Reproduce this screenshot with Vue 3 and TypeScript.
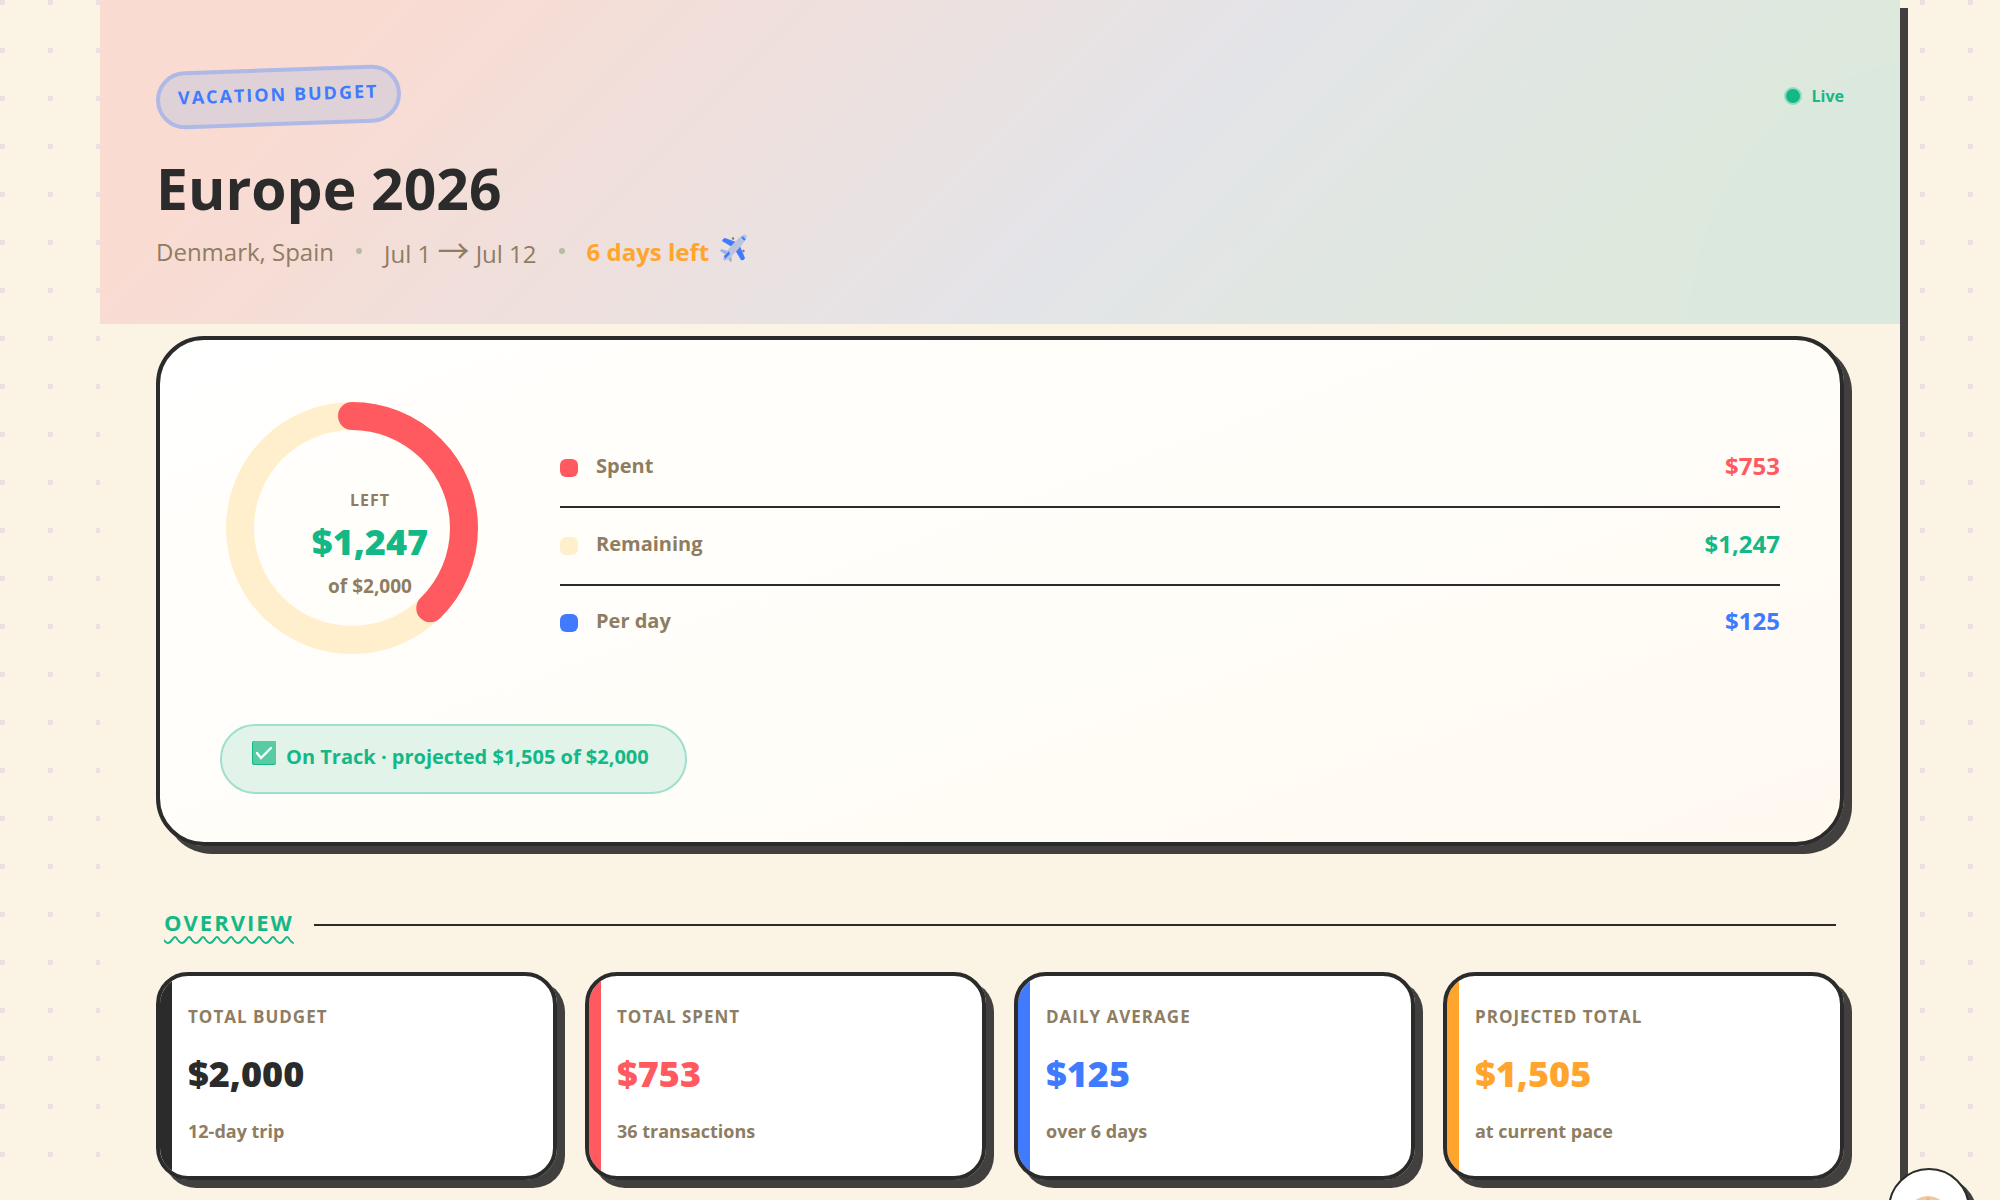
<script setup lang="ts">
interface Stat { label: string; value: string; note: string; tone: string }
interface Row { label: string; value: string; swatch: string; tone: string }

const rows: Row[] = [
  { label: 'Spent', value: '$753', swatch: 'bg-red', tone: 'red' },
  { label: 'Remaining', value: '$1,247', swatch: 'bg-cream', tone: 'green' },
  { label: 'Per day', value: '$125', swatch: 'bg-blue', tone: 'blue' },
]
const stats: Stat[] = [
  { label: 'Total budget', value: '$2,000', note: '12-day trip', tone: 'ink' },
  { label: 'Total spent', value: '$753', note: '36 transactions', tone: 'red' },
  { label: 'Daily average', value: '$125', note: 'over 6 days', tone: 'blue' },
  { label: 'Projected total', value: '$1,505', note: 'at current pace', tone: 'orange' },
]
const radius = 112
const circumference = 2 * Math.PI * radius
const spentArc = `${circumference * (753 / 2000)} ${circumference}`
</script>

<template>
  <div class="backdrop">
    <main class="page">
      <header class="hero">
        <div class="hero-top">
          <span class="tag">Vacation budget</span>
          <span class="live"><i class="live-dot"></i>Live</span>
        </div>
        <h1>Europe 2026</h1>
        <p class="meta">
          <span>Denmark, Spain</span>
          <i class="sep"></i>
          <span>Jul 1 <span class="arrow">→</span> Jul 12</span>
          <i class="sep"></i>
          <span class="days">6 days left</span>
          <svg class="plane" viewBox="0 0 28 28" aria-hidden="true">
            <path d="M16 8 5 4Q3 4 2 7l10 6zM20 12l5 12q-1 3-4 2l-6-10z" fill="#407bff" />
            <path d="M8 17 1 15 0 17l6 4 4 7 2-1-1-8z" fill="#9fb2e8" />
            <path d="M3 25Q5 17 19 4q5-5 7-3t-2 7Q13 22 7 26q-3 2-4-1z" fill="#bdc3dc" />
            <path d="m4 22 5-5 1 3-5 5z" fill="#407bff" />
            <path d="m22 3 3 3" stroke="#407bff" stroke-width="2" />
            <path d="m12 4 2 1M23 16l1 2" stroke="#7d7a80" stroke-width="2" />
          </svg>
        </p>
      </header>

      <section class="summary">
        <div class="summary-main">
          <div class="ring">
            <svg class="ring-svg" viewBox="0 0 264 264" aria-hidden="true">
              <circle class="track" cx="132" cy="132" :r="radius" />
              <circle class="arc" cx="132" cy="132" :r="radius" :stroke-dasharray="spentArc" transform="rotate(-90 132 132)" />
            </svg>
            <div class="ring-text">
              <span class="ring-label">Left</span>
              <strong class="ring-value green">$1,247</strong>
              <span class="ring-note">of $2,000</span>
            </div>
          </div>
          <dl class="legend">
            <div v-for="row in rows" :key="row.label" class="legend-row">
              <dt><i class="swatch" :class="row.swatch"></i><span>{{ row.label }}</span></dt>
              <dd :class="row.tone">{{ row.value }}</dd>
            </div>
          </dl>
        </div>
        <p class="status">
          <svg class="check" viewBox="0 0 24 24" aria-hidden="true">
            <rect width="24" height="24" rx="2" fill="#14b886" />
            <rect x="1" width="23" height="23" rx="2" fill="#58cba5" />
            <path d="m5 12 4 5L19 7" fill="none" stroke="#fff" stroke-width="2.4" stroke-linecap="round" />
          </svg>
          <span>On Track · projected $1,505 of $2,000</span>
        </p>
      </section>

      <div class="section-head">
        <h2>
          Overview
          <svg class="wave" aria-hidden="true">
            <defs>
              <pattern id="wave" width="14" height="10" patternUnits="userSpaceOnUse">
                <path d="M-4 2C-2 2 1 8 4 8S9 2 11 2s4 6 7 6" fill="none" stroke="#14b886" stroke-width="2" />
              </pattern>
            </defs>
            <rect width="100%" height="10" fill="url(#wave)" />
          </svg>
        </h2>
        <div class="rule"></div>
      </div>

      <section class="stats">
        <article v-for="stat in stats" :key="stat.label" class="stat" :class="stat.tone">
          <h3>{{ stat.label }}</h3>
          <strong>{{ stat.value }}</strong>
          <p>{{ stat.note }}</p>
        </article>
      </section>
    </main>
    <button class="helper" type="button" aria-label="Open assistant">
      <svg viewBox="0 0 78 78" aria-hidden="true">
        <circle cx="38" cy="46" r="20" fill="#f2c79d" />
        <path d="M38 28v4" stroke="#c9a27c" stroke-width="1" />
      </svg>
    </button>
  </div>
</template>

<style>
body { background: #fbf3e3; }
</style>

<style scoped>
* { box-sizing: border-box; }
h1, h2, h3, p, dl, dd { margin: 0; }
i { display: block; flex: none; }
.backdrop {
  height: 100vh;
  overflow: hidden;
  padding: 0 100px;
  background: #fbf3e3 radial-gradient(circle at 2px 2px, #eee0df 3px, transparent 3px) 0 0 / 48px 48px;
  color: #2b2b2b;
  font-family: "Open Sans", sans-serif;
  font-weight: 700;
}
.page {
  min-height: 110vh;
  padding-bottom: 56px;
  background: #fbf3e3;
  box-shadow: 8px 8px 0 #41403e;
}
.hero {
  padding: 64px 56px 50px;
  background:
    radial-gradient(circle at calc(100% + 60px) 100%, #dae8de 270px, transparent 271px),
    linear-gradient(135deg, #fadbd1 12%, #e4e4e8 56%, #dde9dc 86%);
}
.hero-top { display: flex; justify-content: space-between; height: 84px; }
.tag {
  height: 58px;
  margin-top: 4px;
  padding: 0 18px;
  border: 4px solid #b0b8e6;
  border-radius: 29px;
  background: #ded2d8;
  color: #407bff;
  font-size: 18px;
  line-height: 44px;
  letter-spacing: 2px;
  text-transform: uppercase;
  transform: rotate(-2deg);
}
.live { display: flex; align-items: center; gap: 10px; height: 64px; color: #14b886; font-size: 16px; }
.live-dot { width: 18px; height: 18px; border: 2px solid #8fdcc2; border-radius: 50%; background: #14b886; }
h1 { font-size: 57px; line-height: 80px; }
.meta { display: flex; align-items: center; gap: 22px; height: 46px; color: #8e7d62; font-size: 24px; font-weight: 400; }
.arrow { font-family: "Noto Sans CJK SC", sans-serif; font-size: 32px; line-height: 1; }
.sep { width: 6px; height: 6px; border-radius: 50%; background: #b9baa4; }
.days { color: #ffa52e; font-weight: 700; }
.plane { width: 28px; height: 28px; margin: 0 0 6px -11px; }
.red { color: #ff5a5f; }
.green { color: #14b886; }
.blue { color: #407bff; }
.orange { color: #ffa52e; }
.ink { color: #2b2b2b; }
.summary {
  margin: 12px 56px 0;
  padding: 56px 60px 48px;
  border: 4px solid #2b2b2b;
  border-radius: 48px;
  background: linear-gradient(160deg, #fff 0%, #fffefa 25%, #fffdf8 60%, #fff9f0 100%);
  box-shadow: 8px 8px 0 #41403e;
}
.summary-main { display: flex; gap: 40px; }
.ring { display: grid; width: 300px; height: 300px; }
.ring > * { grid-area: 1 / 1; }
.ring-svg { width: 264px; height: 264px; }
.track { fill: none; stroke: #ffefcc; stroke-width: 28; }
.arc { fill: none; stroke: #ff5a5f; stroke-width: 28; stroke-linecap: round; }
.ring-text { display: flex; flex-direction: column; align-items: center; justify-content: center; z-index: 1; padding-bottom: 4px; }
.ring-label { color: #8e7d62; font-size: 16px; line-height: 20px; letter-spacing: 1px; text-transform: uppercase; }
.ring-value { font-size: 36px; line-height: 64px; }
.ring-note { color: #8e7d62; font-size: 19px; line-height: 24px; }
.legend { flex: 1; padding-top: 34px; }
.legend-row { display: flex; justify-content: space-between; align-items: center; height: 78px; border-bottom: 2px solid #2b2b2b; }
.legend-row:last-child { height: 74px; border-bottom: 0; }
dt { display: flex; align-items: center; gap: 18px; color: #8e7d62; font-size: 20px; line-height: 28px; }
dt span { padding-bottom: 4px; }
dd { font-size: 24px; line-height: 28px; padding-bottom: 4px; }
.swatch { width: 18px; height: 18px; border-radius: 6px; }
.bg-red { background: #ff5a5f; }
.bg-cream { background: #ffefcc; }
.bg-blue { background: #407bff; }
.status {
  display: flex;
  align-items: center;
  gap: 10px;
  width: fit-content;
  height: 70px;
  margin-top: 28px;
  padding: 0 36px 6px 30px;
  border: 2px solid #9fdfce;
  border-radius: 35px;
  background: #e2f3e9;
  color: #14b886;
  font-size: 20px;
}
.check { width: 24px; height: 24px; margin-bottom: 6px; }
.section-head { display: flex; align-items: center; gap: 20px; height: 46px; margin: 56px 64px 24px; }
h2 {
  position: relative;
  padding-bottom: 6px;
  color: #14b886;
  font-size: 22px;
  line-height: 28px;
  letter-spacing: 2px;
  text-transform: uppercase;
}
.wave { position: absolute; left: 0; bottom: -3px; width: 100%; height: 10px; }
.rule { flex: 1; height: 2px; background: #2b2b2b; }
.stats { display: grid; grid-template-columns: repeat(4, 1fr); gap: 28px; margin: 0 56px; }
.stat {
  padding: 28px 28px 32px;
  border: 4px solid #2b2b2b;
  border-radius: 32px;
  background: linear-gradient(90deg, currentColor 12px, #fff 12px) padding-box;
  box-shadow: 8px 8px 0 #41403e;
}
.stat h3 { color: #8e7d62; font-size: 17px; line-height: 26px; letter-spacing: 1px; text-transform: uppercase; }
.stat strong { display: block; margin: 16px 0; font-size: 36px; line-height: 56px; }
.stat p { color: #8e7d62; font-size: 18px; line-height: 26px; }
.helper {
  position: fixed;
  right: 30px;
  bottom: -50px;
  width: 82px;
  height: 82px;
  padding: 0;
  border: 2px solid #2b2b2b;
  border-radius: 50%;
  background: #fff;
  box-shadow: 8px 8px 0 #41403e;
}
.helper svg { display: block; }
</style>
